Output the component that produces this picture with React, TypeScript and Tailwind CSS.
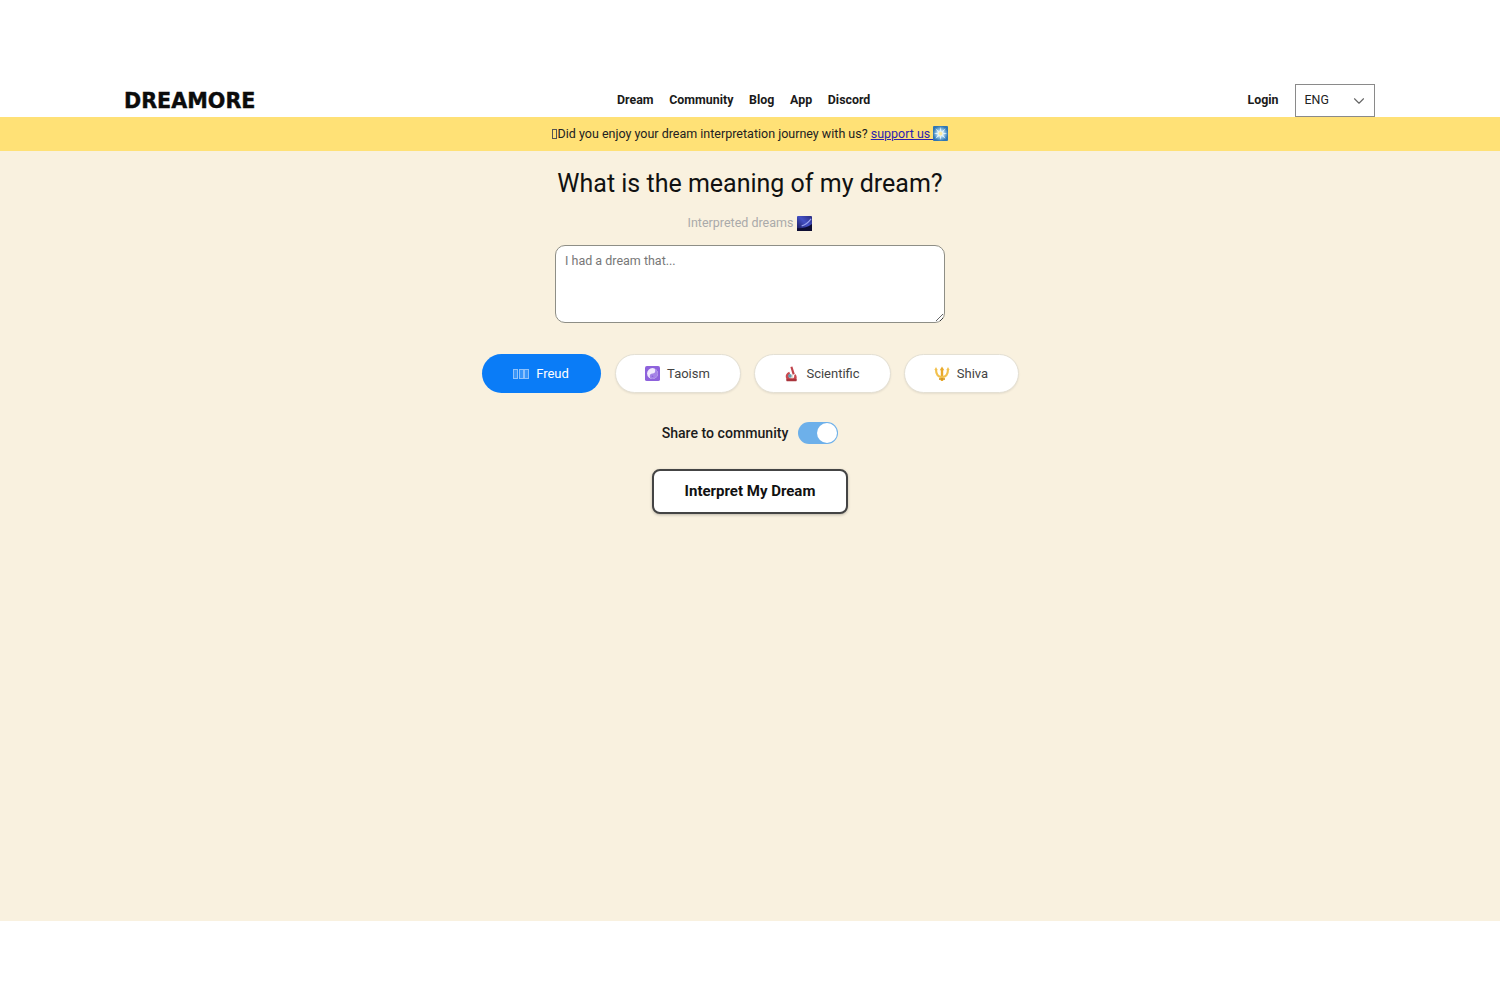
import { ChevronDown } from "lucide-react";

function Tofu() {
  return <span className="inline-block h-[10px] w-[5px] border border-[#8fc2fb] bg-white/20" />;
}

function Sparkler() {
  return (
    <svg viewBox="0 0 16 16" className="inline-block h-[15px] w-[15px] align-[-3px]">
      <defs>
        <radialGradient id="spark">
          <stop offset="0" stopColor="#fff6c8" />
          <stop offset="0.45" stopColor="#a8d4ee" />
          <stop offset="1" stopColor="#2f76b4" />
        </radialGradient>
      </defs>
      <rect width="16" height="16" rx="1" fill="url(#spark)" />
      <path d="M8 1 9 6 13.500 2.500 10.500 7 15 8 10.500 9 13.500 13.500 9 10.500 8 15 7 10.500 2.500 13.500 5.500 9 1 8 5.500 7 2.500 2.500 7 6Z" fill="#e6f3f8" />
      <circle cx="8" cy="8" r="2" fill="#fbeb9f" />
    </svg>
  );
}

function MilkyWay() {
  return (
    <svg viewBox="0 0 16 16" className="inline-block h-[15px] w-[15px] align-[-2px]">
      <defs>
        <linearGradient id="sky" x1="0" y1="1" x2="1" y2="0">
          <stop offset="0" stopColor="#15154f" />
          <stop offset="0.55" stopColor="#4450c4" />
          <stop offset="1" stopColor="#2a2c80" />
        </linearGradient>
      </defs>
      <rect width="16" height="16" rx="1" fill="url(#sky)" />
      <path d="M5 10.500C9 9.500 12 7 15 3" stroke="#9aa4f0" strokeWidth="1.200" fill="none" />
      <path d="M0 13C6 13.500 11 12 16 8.500V16H0Z" fill="#0e0e33" />
    </svg>
  );
}

function YinYang() {
  return (
    <svg viewBox="0 0 16 16" className="h-[15px] w-[15px]">
      <rect width="16" height="16" rx="2" fill="#8e62dc" />
      <circle cx="8" cy="8" r="5.800" fill="#f1eafc" />
      <path d="M8 2.200A5.800 5.800 0 0 1 8 13.800 2.900 2.900 0 0 1 8 8 2.900 2.900 0 0 0 8 2.200Z" fill="#a583e6" />
      <circle cx="8" cy="5.100" r=".9" fill="#f1eafc" />
      <circle cx="8" cy="10.900" r=".9" fill="#8e62dc" />
    </svg>
  );
}

function Microscope() {
  return (
    <svg viewBox="0 0 16 16" className="h-[16px] w-[15px]">
      <path d="M6.800.5 9 0l2.500 8-2.300.7Z" fill="#c0434b" />
      <path d="M5.500 5.500A5.300 5.300 0 0 0 2.800 13.500H13.200A5.300 5.300 0 0 0 12 8L10.800 9.500A3 3 0 0 1 10 12.400L6 12.300A3 3 0 0 1 6.500 7.500Z" fill="#c94a50" />
      <path d="M6 8.300 9.500 9 9.800 12.500H6Z" fill="#e8ddd2" />
      <rect x="2.500" y="13" width="11" height="2.600" rx=".5" fill="#a9343c" />
      <circle cx="6.300" cy="10" r="1.900" fill="#5f9fb5" />
    </svg>
  );
}

function Trident() {
  return (
    <svg viewBox="0 0 16 16" className="h-[16px] w-[16px]" fill="none">
      <path d="M8 2.500V15" stroke="#e8a92c" strokeWidth="2.400" />
      <path d="M8 .6 10.200 4.200H5.800Z" fill="#e8a92c" />
      <path d="M2 3C2 8.500 3.500 10.800 8 11.200 12.500 10.800 14 8.500 14 3" stroke="#f2c14e" strokeWidth="2.200" />
      <path d="M.4 4 2 1 3.600 4ZM12.400 4 14 1 15.600 4Z" fill="#f2c14e" />
      <path d="M5 13H11" stroke="#d4951f" strokeWidth="1.600" />
    </svg>
  );
}

const navLinks = ["Dream", "Community", "Blog", "App", "Discord"];

const pillClass =
  "flex h-[39px] items-center justify-center gap-[7px] rounded-full border border-[#e4e0d4] bg-white text-[13px] text-[#444] shadow-[0_1px_2px_rgba(0,0,0,0.08)]";

export default function App() {
  return (
    <div className="h-[1000px] bg-white pt-[84px] font-['Roboto',sans-serif] text-[#111]">
      <header className="flex h-[33px] items-center px-[125px]">
        <div className="-ml-[1px] mt-[2px] w-[493px] font-['DejaVu_Sans',sans-serif] text-[20.700px] font-bold text-[#0c0c0c] [-webkit-text-stroke:0.4px_#0c0c0c]">
          DREAMORE
        </div>
        <nav className="flex gap-[15.700px] text-[12.400px] font-bold text-[#1a1a1a]">
          {navLinks.map((link) => (
            <a key={link}>{link}</a>
          ))}
        </nav>
        <div className="ml-auto flex items-center gap-[16px]">
          <span className="text-[12.400px] font-bold text-[#1a1a1a]">Login</span>
          <div className="flex h-[33px] w-[80.500px] items-center justify-between border border-[#8a8a8a] pl-[9px] pr-[6.500px] text-[12.400px] text-[#222]">
            <span>ENG</span>
            <ChevronDown className="h-[18px] w-[18px] text-[#666]" strokeWidth={1.5} />
          </div>
        </div>
      </header>

      <div className="flex h-[34px] items-center justify-center bg-[#ffe176] text-[12.500px] text-[#222]">
        <span className="mr-[1px] inline-block h-[10px] w-[5px] border border-[#555]" />
        <span>
          Did you enjoy your dream interpretation journey with us?{" "}
          <a className="text-[#2d1fb0] underline">
            support us <Sparkler />
          </a>
        </span>
      </div>

      <main className="flex h-[770px] flex-col items-center bg-[#f9f1df]">
        <h1 className="mt-[16px] text-[25px] leading-[33px] text-[#111]">
          What is the meaning of my dream?
        </h1>
        <p className="mt-[15px] flex h-[16px] items-center gap-[4px] text-[12.500px] text-[#aaa]">
          Interpreted dreams <MilkyWay />
        </p>
        <textarea
          placeholder="I had a dream that..."
          className="mt-[14px] h-[78px] w-[390px] rounded-[10px] border border-[#8e8e86] bg-white px-[9px] py-[6px] text-[12.500px] text-[#222] outline-none placeholder:text-[#777]"
        />
        <div className="mt-[31px] flex gap-[13px]">
          <button className="mr-[1px] flex h-[39px] w-[119px] items-center justify-center gap-[7px] rounded-full bg-[#0a7cf7] text-[13px] text-white">
            <span className="flex gap-[0.500px]">
              <Tofu />
              <Tofu />
              <Tofu />
            </span>
            Freud
          </button>
          <button className={`${pillClass} w-[126px]`}>
            <YinYang />
            Taoism
          </button>
          <button className={`${pillClass} w-[137px]`}>
            <Microscope />
            Scientific
          </button>
          <button className={`${pillClass} w-[115px]`}>
            <Trident />
            Shiva
          </button>
        </div>
        <div className="mt-[28px] flex h-[24px] items-center gap-[10px]">
          <span className="mt-[1px] text-[14.100px] font-medium text-[#1c1c1c]">Share to community</span>
          <span className="relative h-[22px] w-[40px] rounded-full bg-[#6db0ea]">
            <span className="absolute right-[1px] top-[1px] h-[20px] w-[20px] rounded-full bg-white" />
          </span>
        </div>
        <button className="mt-[24px] h-[45px] w-[196px] rounded-[8px] border-2 border-[#444] bg-white text-[15px] font-bold text-[#111] shadow-[0_1px_3px_rgba(0,0,0,0.25)]">
          Interpret My Dream
        </button>
      </main>
    </div>
  );
}
